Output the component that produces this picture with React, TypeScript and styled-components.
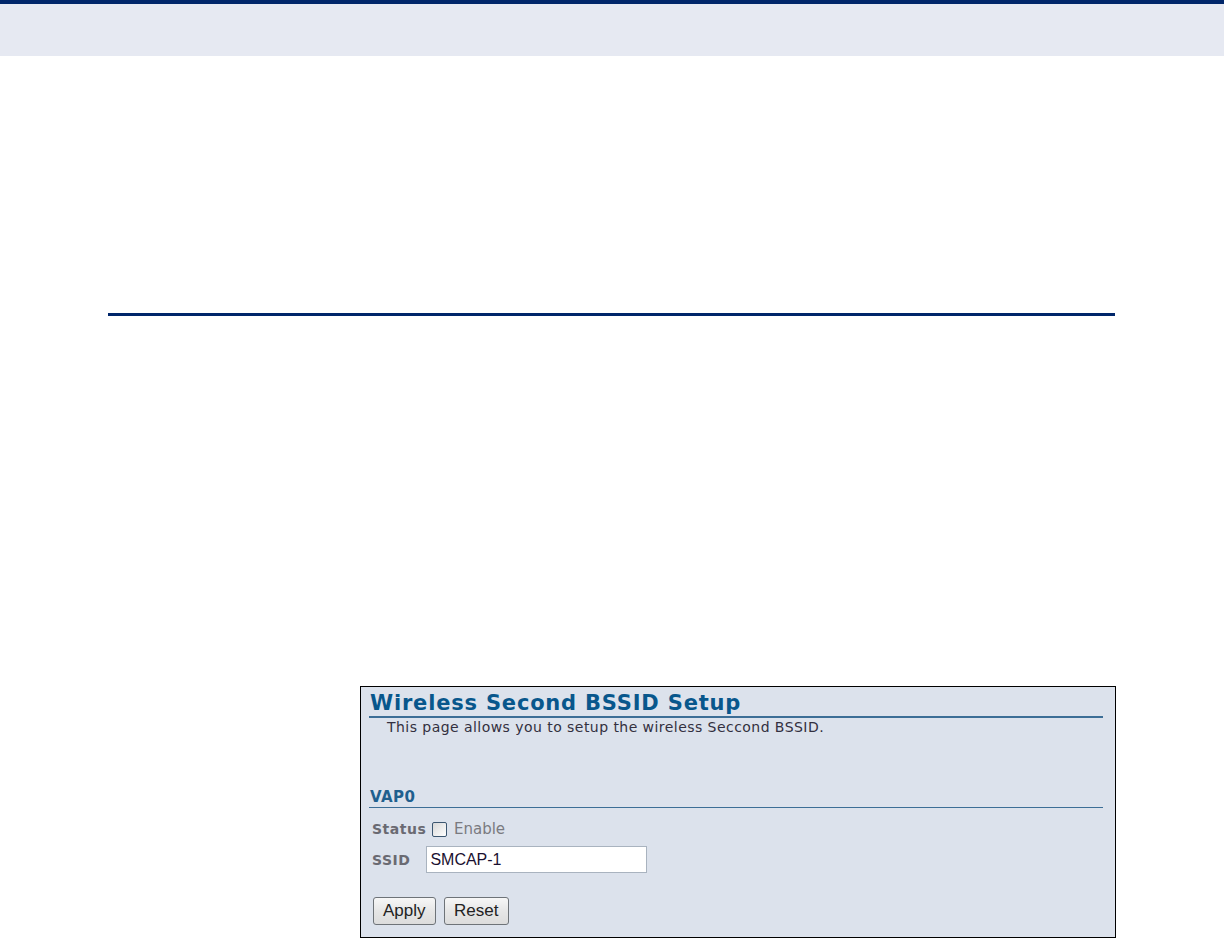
import React from "react";
import styled, { createGlobalStyle } from "styled-components";

const Global = createGlobalStyle`
  html, body { margin: 0; padding: 0; background: #ffffff; }
  body { font-family: "DejaVu Sans", Verdana, sans-serif; }
`;

const Page = styled.div`
  width: 1224px;
  height: 939px;
  overflow: hidden;
  display: flex;
  flex-direction: column;
`;

const TopRule = styled.div`
  height: 4px;
  background: #00266a;
`;

const Band = styled.div`
  height: 52px;
  background: #e6e9f2;
`;

const SectionRule = styled.div`
  margin: 257px 0 0 108px;
  width: 1007px;
  height: 3px;
  background: #00266a;
`;

const Panel = styled.div`
  box-sizing: border-box;
  margin: 370px 0 0 360px;
  width: 756px;
  height: 252px;
  border: 1px solid #000;
  background: #dce2ec;
  display: flex;
  flex-direction: column;
  padding: 0 12px 0 8px;
`;

const Title = styled.h1`
  margin: 4px 0 0 0;
  font-family: "DejaVu Sans", Verdana, sans-serif;
  font-weight: bold;
  font-size: 21px;
  line-height: 25px;
  color: #08578c;
  border-bottom: 2px solid #3c6e96;
  padding-left: 1px;
  letter-spacing: 0.8px;
`;

const Description = styled.p`
  margin: 1px 0 0 18px;
  font-size: 14px;
  line-height: 16px;
  letter-spacing: 0.45px;
  color: #333040;
`;

const SectionHead = styled.div`
  margin-top: 52px;
  font-weight: bold;
  font-size: 15px;
  line-height: 20px;
  letter-spacing: 0.4px;
  color: #1f5f8e;
  border-bottom: 1px solid #3c6e96;
  padding-left: 1px;
`;

const Row = styled.div<{ gap?: number; top: number }>`
  display: flex;
  align-items: center;
  gap: ${(p) => p.gap ?? 6}px;
  padding-left: 3px;
  margin-top: ${(p) => p.top}px;
`;

const Label = styled.span`
  font-weight: bold;
  font-size: 14px;
  letter-spacing: 0.5px;
  color: #6a6a72;
`;

const Check = styled.span`
  width: 15px;
  height: 15px;
  box-sizing: border-box;
  border: 1px solid #3c5670;
  border-radius: 2px;
  background: linear-gradient(135deg, #d8d8d8, #ffffff);
`;

const Enable = styled.span`
  font-size: 15px;
  color: #7a7a80;
  margin-left: -4px;
`;

const Input = styled.input`
  width: 221px;
  height: 27px;
  box-sizing: border-box;
  border: 1px solid #a9b3bf;
  background: #fff;
  font-family: "Liberation Sans", Arial, sans-serif;
  font-size: 16px;
  color: #1a1030;
  padding: 0 3px;
  outline: none;
`;

const Buttons = styled.div`
  display: flex;
  gap: 8px;
  margin-top: 24px;
  padding-left: 4px;
`;

const Button = styled.button<{ pad?: number }>`
  height: 28px;
  box-sizing: border-box;
  border: 1px solid #6e7378;
  border-radius: 3px;
  background: linear-gradient(#f7f7f7, #e6e6e6 50%, #dcdcdc);
  font-family: "Liberation Sans", Arial, sans-serif;
  font-size: 17px;
  color: #222;
  padding: 0 ${(p) => p.pad ?? 8}px;
`;

export default function App() {
  return (
    <Page>
      <Global />
      <TopRule />
      <Band />
      <SectionRule />
      <Panel>
        <Title>Wireless Second BSSID Setup</Title>
        <Description>This page allows you to setup the wireless Seccond BSSID.</Description>
        <SectionHead>VAP0</SectionHead>
        <Row top={12}>
          <Label>Status</Label>
          <Check />
          <Enable>&nbsp;Enable</Enable>
        </Row>
        <Row gap={16} top={8}>
          <Label>SSID</Label>
          <Input defaultValue="SMCAP-1" />
        </Row>
        <Buttons>
          <Button pad={9}>Apply</Button>
          <Button pad={9.5}>Reset</Button>
        </Buttons>
      </Panel>
    </Page>
  );
}
